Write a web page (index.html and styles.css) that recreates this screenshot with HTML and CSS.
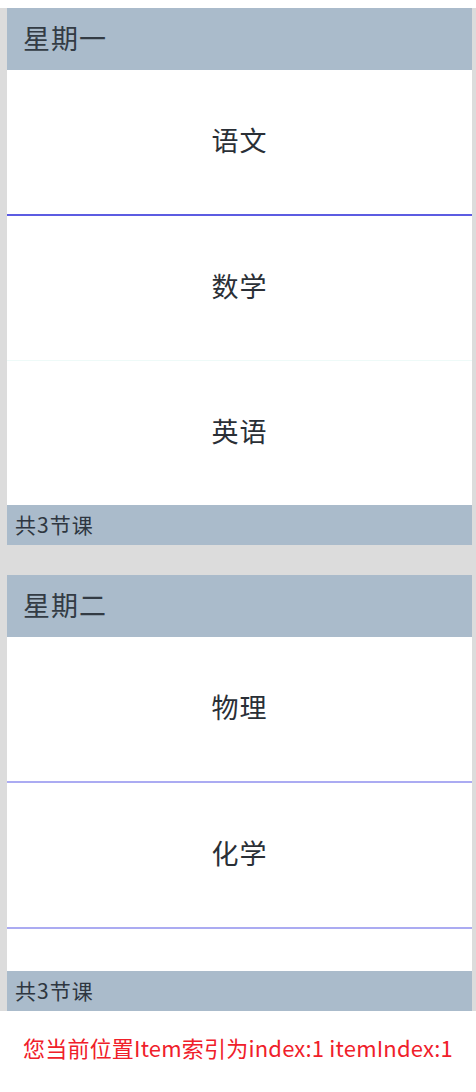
FILE: index.html
```html
<!DOCTYPE html>
<html lang="zh">
<head>
  <meta charset="UTF-8">
  <title>课程表</title>
  <link rel="stylesheet" href="styles.css">
</head>
<body>

<div class="list">
  <div class="group">
    <div class="group-header">星期一</div>
    <div class="item line-dark">语文</div>
    <div class="item line-pale">数学</div>
    <div class="item">英语</div>
    <div class="group-footer">共3节课</div>
  </div>

  <div class="group">
    <div class="group-header">星期二</div>
    <div class="item line-light">物理</div>
    <div class="item line-light">化学</div>
    <div class="item"></div>
    <div class="group-footer">共3节课</div>
  </div>
</div>

<div class="status">您当前位置Item索引为index:1 itemIndex:1</div>

</body>
</html>
```

FILE: styles.css
```css
body {
  margin: 0;
  background: white;
  font-family: "Noto Sans CJK SC", "Noto Sans", sans-serif;
  color: #2a2f36;
}

.list {
  margin-top: 8px;
  height: 1003px;
  padding: 0 4px 0 7px;
  background: #dcdcdc;
  overflow: hidden;
}

.group {
  margin-bottom: 30px;
}

.group-header {
  height: 62px;
  line-height: 60px;
  padding-left: 16px;
  font-size: 27px;
  letter-spacing: 1px;
  background: #aabbcb;
  color: #333b44;
}

.item {
  height: 144px;
  line-height: 140px;
  text-align: center;
  font-size: 27px;
  letter-spacing: 1px;
  background: white;
}

.line-dark {
  border-bottom: 2px solid #5c5ce2;
}

.line-pale {
  border-bottom: 1px solid #eefaf8;
}

.line-light {
  border-bottom: 2px solid #ababf2;
}

.group-footer {
  position: sticky;
  bottom: 0;
  height: 40px;
  line-height: 39px;
  padding-left: 8px;
  font-size: 21px;
  letter-spacing: 1px;
  background: #aabbcb;
  color: #2e3640;
}

.status {
  padding-top: 23px;
  text-align: center;
  font-size: 22px;
  letter-spacing: 0.2px;
  line-height: 26px;
  color: #f0202a;
}
```
